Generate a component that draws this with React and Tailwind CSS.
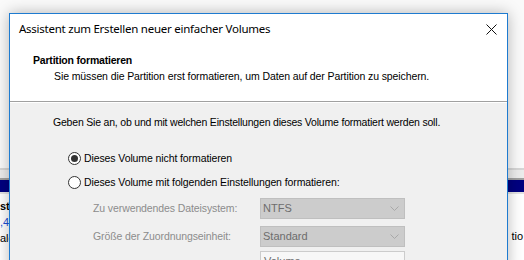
import React from "react";

const ui = { fontFamily: '"Liberation Sans", Arial, sans-serif' };

const Radio = ({ checked, children }) => (
  <div className="flex items-center h-[13px]">
    <span className="w-[13px] h-[13px] rounded-full border border-[#333333] bg-white flex items-center justify-center shrink-0">
      {checked && <span className="w-[7px] h-[7px] rounded-full bg-[#333333]" />}
    </span>
    <span className="ml-[3px] text-[10.5px] tracking-[-0.1px] text-black leading-[13px]">{children}</span>
  </div>
);

const Combo = ({ value }) => (
  <div className="w-[145px] h-[21px] bg-[#cccccc] border border-[#bfbfbf] flex items-center justify-between pl-[2px] pr-[5px]">
    <span className="text-[11px] text-[#6d6d6d]">{value}</span>
    <svg width="9" height="5" viewBox="0 0 9 5">
      <path d="M0.5 0.5 L4.5 4.5 L8.5 0.5" fill="none" stroke="#a8a8a8" strokeWidth="1" />
    </svg>
  </div>
);

export default function App() {
  return (
    <div className="relative w-[524px] h-[260px] overflow-hidden bg-[#fafafa]" style={ui}>
      {/* window behind the dialog */}
      <div className="absolute left-0 right-0 top-[168px] bottom-0 bg-white">
        <div className="h-[2px] bg-[#d6d6d6]" />
        <div className="h-[8px] bg-[#ececec]" />
        <div className="h-[2px] bg-[#a0a0a0]" />
        <div className="h-[12px] bg-[#000080]" />
        <div className="h-[2px] bg-[#e3e3e3]" />
        <div className="flex justify-between text-[11px] leading-[16px]">
          <div className="pt-[4px]">
            <div className="font-bold text-black">ste</div>
            <div className="text-[#1a4fd6]">,4</div>
            <div className="text-black">ale</div>
          </div>
          <div className="pt-[34px] pr-[1px]">
            <div className="text-black">tio</div>
          </div>
        </div>
      </div>

      {/* dialog */}
      <div className="absolute left-[9px] top-[13px] w-[499px] h-[260px] border border-[#1e7bd0] bg-[#f0f0f0] shadow-[0_0_14px_rgba(0,0,0,0.28)] flex flex-col">
        {/* title bar */}
        <div className="h-[31px] bg-white flex items-center justify-between pl-[9px] pr-[10px]">
          <span className="text-[11.5px] text-black tracking-[-0.25px]" style={{ fontFamily: '"Noto Sans", "Liberation Sans", sans-serif' }}>
            Assistent zum Erstellen neuer einfacher Volumes
          </span>
          <svg width="11" height="11" viewBox="0 0 11 11">
            <path d="M0.5 0.5 L10.5 10.5 M10.5 0.5 L0.5 10.5" stroke="#111111" strokeWidth="1" />
          </svg>
        </div>

        {/* header */}
        <div className="h-[58px] bg-white pl-[23px] pt-[9px]">
          <div className="text-[10.5px] font-bold tracking-[-0.2px] text-black leading-[14px]">Partition formatieren</div>
          <div className="pl-[21px] mt-[2px] text-[10.5px] tracking-[-0.1px] text-black leading-[14px]">
            Sie müssen die Partition erst formatieren, um Daten auf der Partition zu speichern.
          </div>
        </div>
        <div className="h-[2px] border-t border-[#a0a0a0] border-b border-b-white" />

        {/* body */}
        <div className="pl-[43px] pt-[12px]">
          <div className="text-[10.5px] tracking-[-0.2px] text-black leading-[14px]">
            Geben Sie an, ob und mit welchen Einstellungen dieses Volume formatiert werden soll.
          </div>
          <div className="pl-[15px] mt-[23px] flex flex-col gap-[11px]">
            <Radio checked>Dieses Volume nicht formatieren</Radio>
            <Radio>Dieses Volume mit folgenden Einstellungen formatieren:</Radio>
          </div>
          <div className="pl-[40px] mt-[9px] flex flex-col gap-[7px]">
            <div className="flex items-center">
              <span className="w-[167px] text-[10.5px] tracking-[-0.1px] text-[#8c8c8c]">Zu verwendendes Dateisystem:</span>
              <Combo value="NTFS" />
            </div>
            <div className="flex items-center">
              <span className="w-[167px] text-[10.5px] tracking-[-0.1px] text-[#8c8c8c]">Größe der Zuordnungseinheit:</span>
              <Combo value="Standard" />
            </div>
          </div>
          <div className="pl-[207px] mt-[4px]">
            <div className="w-[145px] h-[21px] bg-[#f7f7f7] border border-[#cccccc] pl-[3px] text-[11px] text-[#6d6d6d] leading-[19px]">
              Volume
            </div>
          </div>
        </div>
      </div>
    </div>
  );
}
